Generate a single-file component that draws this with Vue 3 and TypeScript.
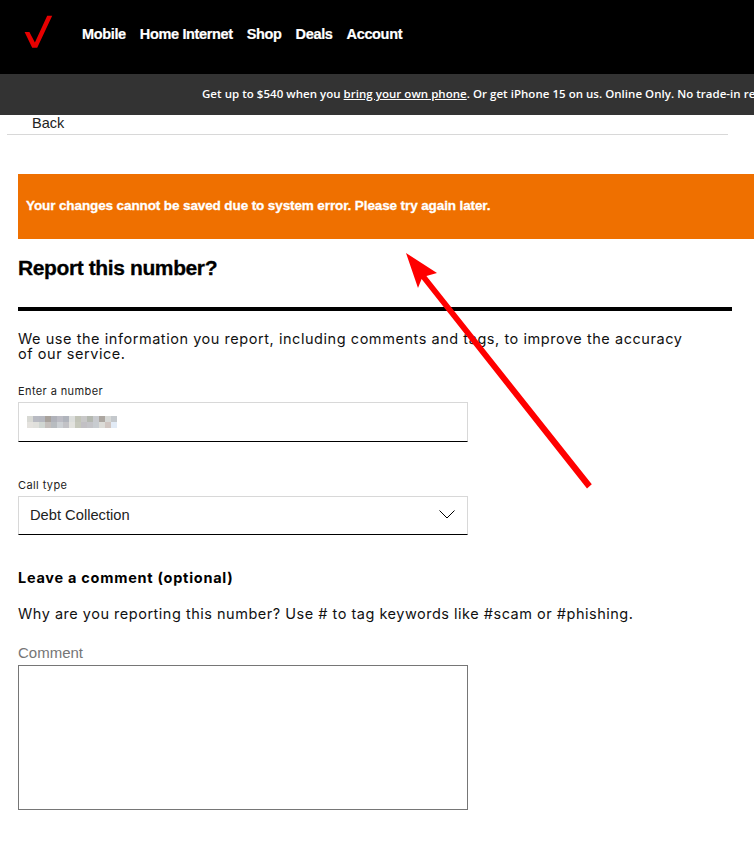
<script setup lang="ts">
const navItems: string[] = ['Mobile', 'Home Internet', 'Shop', 'Deals', 'Account']
const blurRows: string[][] = [
  ['#d8d9d4','#b8bac2','#b6b8c0','#a8a29c','#b0b2ba','#bcbcc4','#b0b4bc','#dcdedc','#c2c4b8','#c8c8c8','#b4b8b0','#c8cace','#aca6a0','#d6d8d6','#c4c8cc'],
  ['#e4e2de','#e0e0dc','#d0d6d2','#c4bfbc','#b8bcc0','#ccd0d4','#c2c2c6','#e2e2de','#c6c8bc','#c2c0c4','#c4c4c8','#c8ccd0','#dcdcd8','#d0c6c2','#e2ebf6'],
]
</script>

<template>
  <div class="page">
    <header class="topbar">
      <svg class="logo" width="30" height="34" viewBox="0 0 30 34" aria-label="Verizon">
        <path d="M23.2 0.7 H28.2 L13.2 32.7 H8.2 L0.6 17 H5.4 L10.9 27.4 Z" fill="#e60000" />
      </svg>
      <nav class="nav">
        <a v-for="item in navItems" :key="item" class="nav-item">{{ item }}</a>
      </nav>
    </header>
    <div class="promo">
      Get up to $540 when you <u>bring your own phone</u>. Or get iPhone 15 on us. Online Only. No trade-in required.
    </div>
    <div class="back-row"><span>Back</span></div>
    <main class="content">
      <div class="alert">Your changes cannot be saved due to system error. Please try again later.</div>
      <h1 class="title">Report this number?</h1>
      <hr class="rule" />
      <p class="intro">We use the information you report, including comments and tags, to improve the accuracy of our service.</p>

      <label class="field-label first">Enter a number</label>
      <div class="input">
        <div class="blur">
          <div v-for="(row, r) in blurRows" :key="r" class="blur-row">
            <i v-for="(c, i) in row" :key="i" :style="{ background: c }"></i>
          </div>
        </div>
      </div>

      <label class="field-label second">Call type</label>
      <div class="input select">
        <span>Debt Collection</span>
        <svg width="16" height="9" viewBox="0 0 16 9"><path d="M0.5 0.5 L8 8 L15.5 0.5" fill="none" stroke="#000" stroke-width="1" /></svg>
      </div>

      <h2 class="subhead">Leave a comment (optional)</h2>
      <p class="why">Why are you reporting this number? Use # to tag keywords like #scam or #phishing.</p>
      <label class="comment-label">Comment</label>
      <div class="textarea"></div>
    </main>

    <svg class="arrow" width="754" height="853" viewBox="0 0 754 853">
      <path d="M406 253 L437 273 L426.4 276 L591.8 484.2 L587 488.6 L421.6 279 L418 288 Z" fill="#ff0000" />
    </svg>
  </div>
</template>

<style scoped>
.page {
  position: relative;
  width: 754px;
  height: 853px;
  overflow: hidden;
  background: #fff;
  font-family: "Liberation Sans", Arial, sans-serif;
  color: #000;
}
.topbar {
  height: 74px;
  background: #000;
  display: flex;
  align-items: flex-start;
  padding-left: 24px;
  box-sizing: border-box;
}
.logo {
  margin-top: 15px;
  overflow: visible;
}
.nav {
  display: flex;
  gap: 14px;
  margin-left: 28px;
  margin-top: 25px;
}
.nav-item {
  color: #fff;
  font-size: 14.5px;
  font-weight: 700;
  line-height: 18px;
  letter-spacing: -0.35px;
  -webkit-text-stroke: 0.2px #fff;
}
.promo {
  height: 41px;
  background: #333;
  color: #fff;
  font-family: "Open Sans", sans-serif;
  font-size: 11.5px;
  font-weight: 600;
  line-height: 39px;
  letter-spacing: 0.03px;
  padding-left: 202px;
  white-space: nowrap;
  overflow: hidden;
}
.back-row {
  height: 19px;
  margin: 0 26px 0 7px;
  border-bottom: 1px solid #d8d8d8;
  padding-left: 25px;
  font-size: 14.5px;
  line-height: 16px;
  color: #222;
}
.content {
  padding: 39px 0 0 18px;
}
.alert {
  height: 65px;
  background: #ef7000;
  color: #fff;
  font-size: 13.5px;
  font-weight: 700;
  line-height: 63px;
  padding-left: 8px;
  letter-spacing: -0.11px;
  -webkit-text-stroke: 0.3px #fff;
  white-space: nowrap;
}
.title {
  margin: 17px 0 0;
  font-size: 21px;
  line-height: 24px;
  font-weight: 700;
  letter-spacing: -0.39px;
  -webkit-text-stroke: 0.3px #000;
}
.rule {
  width: 714px;
  height: 4px;
  margin: 27px 0 0;
  border: 0;
  background: #000;
}
.intro {
  width: 680px;
  margin: 20px 0 0;
  font-family: "Inter", sans-serif;
  font-size: 14.5px;
  line-height: 15px;
  letter-spacing: 0.55px;
  color: #111;
}
.field-label {
  display: block;
  font-family: "Inter", sans-serif;
  font-size: 11px;
  line-height: 14px;
  letter-spacing: 0.4px;
  color: #222;
}
.field-label.first {
  margin-top: 23px;
}
.field-label.second {
  margin-top: 36px;
}
.input {
  width: 450px;
  box-sizing: border-box;
  margin-top: 4px;
  height: 40px;
  border: 1px solid #d8d8d8;
  border-bottom: 1px solid #000;
  display: flex;
  align-items: center;
}
.blur {
  margin-left: 8px;
}
.blur-row {
  display: flex;
  height: 6px;
}
.blur-row i {
  display: block;
  width: 6px;
  height: 6px;
}
.select {
  height: 39px;
  justify-content: space-between;
  padding: 0 12px 2px 11px;
  font-size: 14.7px;
  color: #222;
}
.subhead {
  margin: 34px 0 0;
  font-family: "Inter", sans-serif;
  font-size: 14.5px;
  line-height: 17px;
  font-weight: 700;
  letter-spacing: 0.73px;
}
.why {
  margin: 19px 0 0;
  font-family: "Inter", sans-serif;
  font-size: 14.5px;
  line-height: 17px;
  letter-spacing: 0.51px;
  color: #111;
}
.comment-label {
  display: block;
  margin-top: 23px;
  font-size: 15px;
  line-height: 16px;
  color: #767676;
}
.textarea {
  width: 450px;
  height: 145px;
  box-sizing: border-box;
  margin-top: 4px;
  border: 1px solid #767676;
}
.arrow {
  position: absolute;
  left: 0;
  top: 0;
  pointer-events: none;
}
</style>
